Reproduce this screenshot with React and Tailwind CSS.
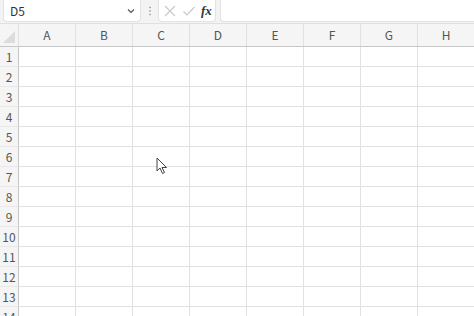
import React from "react";

const cols = ["A", "B", "C", "D", "E", "F", "G", "H"];
const rows = Array.from({ length: 14 }, (_, i) => i + 1);

export default function App() {
  return (
    <div
      className="w-[474px] h-[316px] overflow-hidden bg-white relative"
      style={{ fontFamily: '"Noto Sans CJK JP", "Noto Sans", sans-serif' }}
    >
      {/* formula bar */}
      <div className="h-[24px] bg-[#f3f3f3] flex items-start border-b border-[#e0e0e0]">
        <div className="ml-[3px] w-[138px] h-[22px] bg-white rounded-b-[4px] border border-t-0 border-[#e3e3e3] flex items-center pl-[6px] pr-[3px]">
          <span className="text-[12px] text-[#333] flex-1 leading-none">D5</span>
          <svg width="12" height="12" viewBox="0 0 12 12">
            <path d="M3 4.5 L6 7.5 L9 4.5" fill="none" stroke="#555" strokeWidth="1.2" />
          </svg>
        </div>
        <div className="w-[17px] h-[22px] flex items-center justify-center">
          <svg width="4" height="12" viewBox="0 0 4 12">
            <circle cx="2" cy="2.5" r="0.8" fill="#888" />
            <circle cx="2" cy="6" r="0.8" fill="#888" />
            <circle cx="2" cy="9.5" r="0.8" fill="#888" />
          </svg>
        </div>
        <div className="w-[58px] h-[22px] bg-white rounded-b-[4px] border border-t-0 border-[#e3e3e3] flex items-center pl-[3px]">
          <svg width="14" height="14" viewBox="0 0 14 14" className="ml-[1px]">
            <path d="M2 2 L12 12 M12 2 L2 12" stroke="#c8c8c8" strokeWidth="1.1" />
          </svg>
          <svg width="14" height="14" viewBox="0 0 14 14" className="ml-[5px]">
            <path d="M1.5 7.5 L5 11 L12.5 3" fill="none" stroke="#c8c8c8" strokeWidth="1.1" />
          </svg>
          <span
            className="ml-[5px] text-[13px] text-[#333] italic font-bold leading-none"
            style={{ fontFamily: '"Liberation Serif", serif' }}
          >
            fx
          </span>
        </div>
        <div className="ml-[4px] flex-1 h-[22px] bg-white rounded-bl-[4px] border border-t-0 border-r-0 border-[#e3e3e3]" />
      </div>

      {/* column headers */}
      <div className="flex h-[23px] bg-[#f5f5f5] border-b border-[#c8c8c8]">
        <div className="w-[19px] shrink-0 relative border-r border-[#e0e0e0]">
          <svg width="12" height="12" viewBox="0 0 12 12" className="absolute right-[3px] bottom-[3px]">
            <path d="M12 0 L12 12 L0 12 Z" fill="#dcdcdc" />
          </svg>
        </div>
        {cols.map((c) => (
          <div
            key={c}
            className="w-[57px] shrink-0 border-r border-[#e0e0e0] flex items-center justify-center text-[12px] text-[#555]"
          >
            {c}
          </div>
        ))}
      </div>

      {/* grid */}
      {rows.map((r) => (
        <div key={r} className="flex h-[20px]">
          <div className="w-[19px] shrink-0 bg-[#f5f5f5] border-r border-[#c8c8c8] border-b border-b-[#e8e8e8] flex items-center justify-center text-[12px] text-[#555]">
            {r}
          </div>
          {cols.map((c) => (
            <div key={c} className="w-[57px] shrink-0 border-r border-b border-[#e1e1e1]" />
          ))}
        </div>
      ))}

      {/* mouse cursor */}
      <svg
        width="13"
        height="18"
        viewBox="0 0 13 18"
        className="absolute left-[156px] top-[157px]"
      >
        <path
          d="M1 1 L1 14 L4 11 L6.5 16.5 L8.5 15.5 L6 10.5 L10.5 10.5 Z"
          fill="white"
          stroke="#444"
          strokeWidth="1"
          strokeLinejoin="round"
        />
      </svg>
    </div>
  );
}
